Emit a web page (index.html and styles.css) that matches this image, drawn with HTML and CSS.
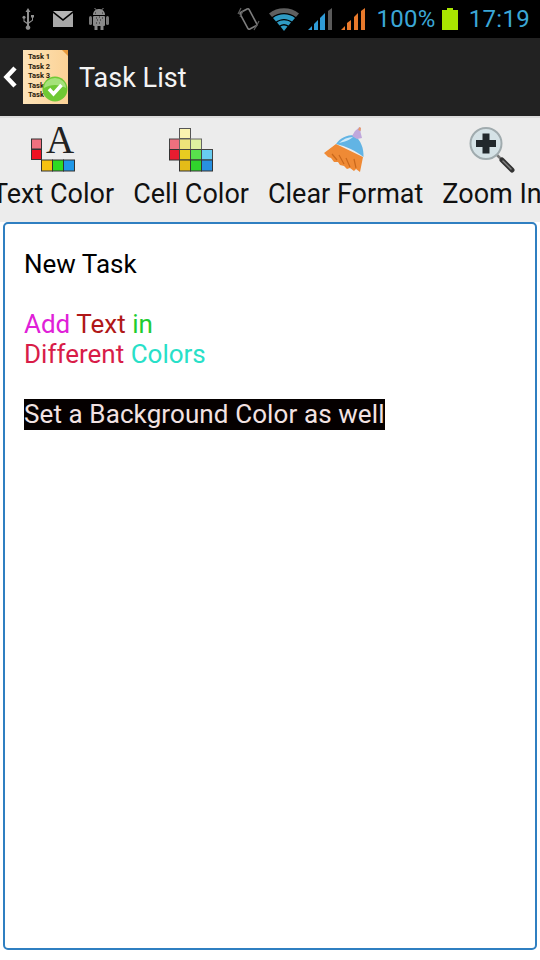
FILE: index.html
```html
<!DOCTYPE html>
<html lang="en">
<head>
    <meta charset="UTF-8">
    <meta name="viewport" content="width=device-width, initial-scale=1.0">
    <title>Task List</title>
    <link rel="stylesheet" href="styles.css">
</head>
<body>
    <div class="status-bar">
        <div class="status-left">
            <svg class="ico-usb" width="14" height="22" viewBox="0 0 14 22"><path d="M7 0 9.500 4H8v10l3-2V9.500h-1V7h3v2.500h-1V12.600L8 15.500V17.500a2.300 2.300 0 1 1-2 0V16L2.500 13.500V10.800a1.500 1.500 0 1 1 1 0V12.800L6 14.500V4H4.500z" fill="#8f8f8f"/></svg>
            <svg class="ico-mail" width="20" height="16" viewBox="0 0 20 16"><path d="M0 0H20L10 8z" fill="#b5b5b5"/><path d="M0 2 10 10 20 2V16H0z" fill="#a8a8a8"/></svg>
            <svg width="20" height="22" viewBox="0 0 20 22">
                <path d="M4 7C4 3 7 1 10 1S16 3 16 7z" fill="#8c8c8c"/>
                <path d="M5.500 0 8 2.500M14.500 0 12 2.500" stroke="#8c8c8c" stroke-width="1"/>
                <rect x="4" y="8" width="12" height="10" rx="1" fill="#8a8a8a"/>
                <rect x="0" y="8" width="3" height="9" rx="1.500" fill="#777"/>
                <rect x="17" y="8" width="3" height="9" rx="1.500" fill="#777"/>
                <rect x="5.500" y="18" width="3" height="4" fill="#888"/>
                <rect x="11.500" y="18" width="3" height="4" fill="#888"/>
                <path d="M7 10h1M10 9h1M8 12h1M11 12h1M7 15h1M10 15h1M13 10h1M6 5h1M13 5h1" stroke="#222" stroke-width="1"/>
            </svg>
        </div>
        <div class="status-right">
            <svg class="ico-vibrate" width="23" height="26" viewBox="0 0 23 26">
                <rect x="6.500" y="3.500" width="10" height="19" rx="1.500" transform="rotate(-28 11.500 13)" fill="none" stroke="#7d7d7d" stroke-width="1.600"/>
                <path d="M1 8 4 2M3 11 6 5M17 24 21 17M19 21 22 15" stroke="#5c5c5c" stroke-width="1.200"/>
            </svg>
            <svg class="ico-wifi" width="30" height="23" viewBox="0 0 30 23">
                <path d="M0 5.500C8-1.500 22-1.500 30 5.500L27 9C20 3.500 10 3.500 3 9z" fill="#5f5f5f"/>
                <path d="M4 10C10 5 20 5 26 10L23 13.500C18 10 12 10 7 13.500z" fill="#2f9bc4"/>
                <path d="M8 14.500C12 11.500 18 11.500 22 14.500L19.500 17.500C16.500 15.500 13.500 15.500 10.500 17.500z" fill="#2f9bc4"/>
                <path d="M11.500 18.500C14 17 16 17 18.500 18.500L15 23z" fill="#2f9bc4"/>
            </svg>
            <svg class="ico-signal" width="24" height="22" viewBox="0 0 24 22">
                <path d="M0 22 4 18V22z" fill="#2f9bd6"/>
                <path d="M6 22V16L10 12V22z" fill="#2f9bd6"/>
                <path d="M12 22V10L17 5V22z" fill="#2f9bd6"/>
                <path d="M20 22V3L24 0V22z" fill="#5a5a5a"/>
            </svg>
            <svg class="ico-signal-2" width="24" height="22" viewBox="0 0 24 22">
                <path d="M0 22 4 18V22z" fill="#e8792b"/>
                <path d="M6 22V15L10 12V22z" fill="#e8792b"/>
                <path d="M13 22V9L17 5V22z" fill="#e8792b"/>
                <path d="M20 22V3L24 0V22z" fill="#e8792b"/>
            </svg>
            <span class="status-text">100%</span>
            <svg class="ico-battery" width="16" height="22" viewBox="0 0 16 22"><path d="M5 0H11V2H16V22H0V2H5z" fill="#a8e600"/></svg>
            <span class="status-text">17:19</span>
        </div>
    </div>

    <div class="action-bar">
        <svg class="back" width="15" height="22" viewBox="0 0 15 22"><path d="M13 2 4.500 11 13 20" fill="none" stroke="#fff" stroke-width="4.500"/></svg>
        <div class="app-icon">
            <span>Task 1</span>
            <span>Task 2</span>
            <span>Task 3</span>
            <span>Task 4</span>
            <span>Task 5</span>
            <svg class="check" width="26" height="26" viewBox="0 0 26 26">
                <circle cx="13" cy="13" r="12.500" fill="#6fc934"/>
                <path d="M2 12A11 10 0 0 1 24 12C17 8 9 8 2 12z" fill="#a5e27a"/>
                <path d="M7 13 11.500 18 19.500 9" fill="none" stroke="#fff" stroke-width="3.500"/>
            </svg>
        </div>
        <h1 class="title">Task List</h1>
    </div>

    <div class="toolbar">
        <div class="tool tool-text">
            <svg width="46" height="46" viewBox="0 0 46 46">
                <text x="30" y="26" class="glyph-a">A</text>
                <rect x="1.500" y="12" width="10" height="10" fill="#f0707e" stroke="#333"/>
                <rect x="1.500" y="22.500" width="10" height="10" fill="#ee1122" stroke="#333"/>
                <rect x="11.500" y="33" width="11" height="11" fill="#f5c211" stroke="#333"/>
                <rect x="22.500" y="33" width="11" height="11" fill="#2fdc22" stroke="#333"/>
                <rect x="33.500" y="33" width="11" height="11" fill="#2098e8" stroke="#333"/>
            </svg>
            <span>Text Color</span>
        </div>
        <div class="tool tool-cell">
            <svg width="46" height="46" viewBox="0 0 46 46">
                <rect x="11.500" y="1.500" width="11" height="10" fill="#faf3b0" stroke="#555"/>
                <rect x="1.500" y="12" width="10" height="10.500" fill="#f0707e" stroke="#444"/>
                <rect x="11.500" y="12" width="11" height="10.500" fill="#efe47a" stroke="#666"/>
                <rect x="22.500" y="12" width="11" height="10.500" fill="#def0a0" stroke="#666"/>
                <rect x="1.500" y="22.500" width="10" height="10.500" fill="#e81c30" stroke="#333"/>
                <rect x="11.500" y="22.500" width="11" height="10.500" fill="#e8cc20" stroke="#444"/>
                <rect x="22.500" y="22.500" width="11" height="10.500" fill="#58e04c" stroke="#444"/>
                <rect x="33.500" y="22.500" width="11" height="10.500" fill="#68ccf0" stroke="#444"/>
                <rect x="11.500" y="33" width="11" height="11" fill="#e4bc18" stroke="#333"/>
                <rect x="22.500" y="33" width="11" height="11" fill="#30d42c" stroke="#333"/>
                <rect x="33.500" y="33" width="11" height="11" fill="#2890e0" stroke="#333"/>
            </svg>
            <span>Cell Color</span>
        </div>
        <div class="tool tool-clear">
            <svg width="46" height="46" viewBox="0 0 46 46">
                <path d="M1 26 13 17 40 30 37 45 33 42 31 44 27 41 24 42 21 39 17 38 15 35 11 35 8 31 5 30z" fill="#ef8a35"/>
                <path d="M9 27 14 33M16 28 21 37M23 31 27 40M31 32 33 41" stroke="#c9681c" stroke-width="1.200"/>
                <path d="M13 17C17 11 24 8 31 8 38 13 41 22 40.500 30 33 24 23 19 13 17z" fill="#62b4e4"/>
                <path d="M16 16C20 12 25 10 30 10 27 13 21 15 16 16z" fill="#cfeafa"/>
                <path d="M29 9 32 4 35.500 1 36 0 38 1 37.500 5 39 11 34 12z" fill="#c0a8dc"/>
                <path d="M35 3 36.500 0 38 1 37.500 4z" fill="#e89a6a"/>
            </svg>
            <span>Clear Format</span>
        </div>
        <div class="tool tool-zoom">
            <svg width="46" height="46" viewBox="0 0 46 46">
                <path d="M28 28 33 33" stroke="#777" stroke-width="2.500"/>
                <path d="M33 33 43 43" stroke="#333" stroke-width="5" stroke-linecap="round"/>
                <path d="M34 34 42 42" stroke="#808080" stroke-width="1.500" stroke-linecap="round"/>
                <circle cx="17" cy="16.500" r="15.500" fill="#d5e2e6" stroke="#a0abae" stroke-width="2"/>
                <path d="M13.500 6.500H20.500V13H27V20H20.500V26.500H13.500V20H7V13H13.500z" fill="#22282c"/>
            </svg>
            <span>Zoom In</span>
        </div>
    </div>

    <div class="editor">
        <p class="line">New Task</p>
        <p class="line blank"></p>
        <p class="line"><span class="c-magenta">Add</span> <span class="c-darkred">Text</span> <span class="c-green">in</span></p>
        <p class="line"><span class="c-crimson">Different</span> <span class="c-cyan">Colors</span></p>
        <p class="line blank"></p>
        <p class="line"><span class="highlight">Set a Background Color as well</span></p>
    </div>
</body>
</html>
```

FILE: styles.css
```css
html, body {
    margin: 0;
    padding: 0;
}
body {
    width: 540px;
    height: 960px;
    overflow: hidden;
    background-color: #fff;
    font-family: Roboto, "Liberation Sans", sans-serif;
    display: flex;
    flex-direction: column;
}
.status-bar {
    height: 38px;
    background-color: #000;
    display: flex;
    justify-content: space-between;
    align-items: center;
    flex-shrink: 0;
}
.status-left {
    display: flex;
    align-items: center;
    padding-left: 21px;
}
.ico-usb {
    margin-right: 18px;
}
.ico-mail {
    margin-right: 16px;
}
.status-right {
    display: flex;
    align-items: center;
    padding-right: 10px;
}
.ico-vibrate {
    margin-right: 9px;
}
.ico-wifi {
    margin-right: 9px;
}
.ico-signal {
    margin-right: 9px;
}
.ico-signal-2 {
    margin-right: 11px;
}
.ico-battery {
    margin: 0 11px 0 6px;
}
.status-text {
    color: #3ba7d6;
    font-size: 24px;
    letter-spacing: .3px;
}
.action-bar {
    height: 78px;
    background-color: #222;
    display: flex;
    align-items: center;
    flex-shrink: 0;
}
.back {
    margin-left: 2px;
    margin-right: 6px;
}
.app-icon {
    width: 45px;
    height: 54px;
    background: linear-gradient(90deg, #fde3b8, #fbd296);
    position: relative;
    padding: 2px 0 0 5px;
    box-sizing: border-box;
    display: flex;
    flex-direction: column;
    margin-right: 11px;
}
.app-icon::after {
    content: "";
    position: absolute;
    top: 0;
    right: 0;
    border-top: 6px solid #e89a3c;
    border-left: 6px solid transparent;
}
.app-icon span {
    font-size: 7.500px;
    line-height: 9.500px;
    font-weight: 700;
    color: #2a1a0a;
}
.check {
    position: absolute;
    right: 0;
    bottom: 2px;
}
.title {
    margin: 2px 0 0;
    font-size: 27px;
    font-weight: 400;
    color: #f4f4f4;
}
.toolbar {
    height: 106px;
    background-color: #ececec;
    border-top: 2px solid #dcdcdc;
    box-sizing: border-box;
    display: flex;
    flex-shrink: 0;
    overflow: hidden;
    gap: 19px;
}
.tool {
    display: flex;
    flex-direction: column;
    align-items: center;
    flex-shrink: 0;
    padding-top: 9px;
    font-size: 27px;
    color: #111;
}
.tool svg {
    display: block;
    overflow: visible;
}
.tool span {
    line-height: 30px;
    margin-top: 6px;
}
.tool-text {
    margin-left: -8px;
}
.glyph-a {
    font-family: "Liberation Serif", serif;
    font-size: 39px;
    text-anchor: middle;
    fill: #222;
}
.editor {
    margin: 0 3px 10px;
    flex: 1;
    border: 2px solid #2f7fc1;
    border-radius: 5px;
    box-sizing: border-box;
    padding: 25px 20px 0 19px;
    font-size: 26px;
    color: #000;
}
.line {
    margin: 0;
    height: 30px;
    line-height: 30px;
}
.highlight {
    background-color: #050000;
    color: #f2e2e2;
    display: inline-block;
    height: 31px;
    line-height: 31px;
    letter-spacing: .1px;
}
.c-magenta { color: #e020d8; }
.c-darkred { color: #b01818; }
.c-green { color: #20cc30; }
.c-crimson { color: #d81c48; }
.c-cyan { color: #28e0c8; }
```
